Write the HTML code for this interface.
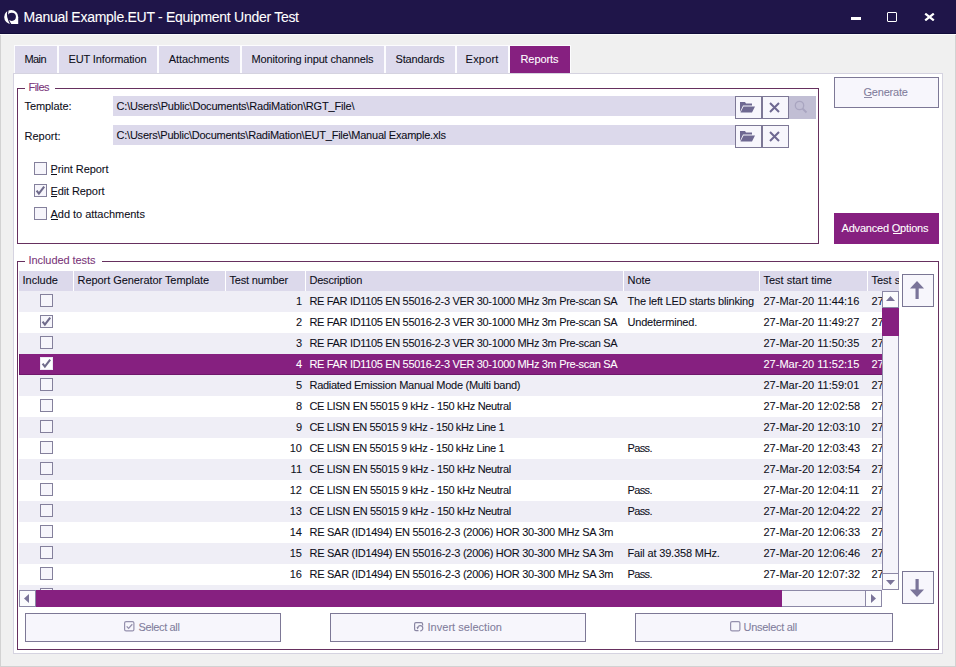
<!DOCTYPE html>
<html><head><meta charset="utf-8">
<style>
*{box-sizing:border-box;margin:0;padding:0}
html,body{width:956px;height:667px;overflow:hidden;background:#f0f0f0;font-family:"Liberation Sans",sans-serif;font-size:11px;color:#0e0e1a}
.a{position:absolute}
.t{position:absolute;white-space:nowrap;line-height:20px;-webkit-text-stroke:0.08px currentColor}
</style></head><body>
<div class="a" style="left:0px;top:0px;width:956px;height:34px;background:#1f1549"></div>
<div class="a" style="left:0px;top:33px;width:956px;height:1px;background:#110b3a"></div>
<div class="a" style="left:0px;top:34px;width:956px;height:1px;background:#fbfbfb"></div>
<div class="a" style="left:0px;top:35px;width:1px;height:632px;background:#d2d2d2"></div>
<div class="a" style="left:955px;top:35px;width:1px;height:632px;background:#d2d2d2"></div>
<div class="a" style="left:0px;top:666px;width:956px;height:1px;background:#d2d2d2"></div>
<svg class="a" style="left:0px;top:6px" width="24" height="22" viewBox="0 6 24 22">
  <circle cx="11.2" cy="17" r="7" fill="#fff"/>
  <path d="M11.2 17 H18.2 V24 H11.2 Z" fill="#fff"/>
  <circle cx="11.8" cy="16.8" r="4.1" fill="#1f1549"/>
  <path d="M8 10 Q6.3 17.5 11 24.8" fill="none" stroke="#1f1549" stroke-width="1.2"/>
</svg>
<div class="a" style="left:851px;top:17px;width:10px;height:3px;background:#fff"></div>
<div class="a" style="left:887px;top:12px;width:9.5px;height:9.5px;border:1.5px solid #fff;border-radius:1px"></div>
<svg class="a" style="left:924px;top:12.5px" width="11" height="8" viewBox="0 0 11 8">
  <path d="M1.2 0.6 L9.8 7.4 M9.8 0.6 L1.2 7.4" stroke="#fff" stroke-width="2.2"/></svg>
<div class="a" style="left:14px;top:45px;width:44px;height:28px;background:#fcfcfe"></div>
<div class="a" style="left:15px;top:46px;width:42px;height:27px;background:#dddaec"></div>
<div class="a" style="left:58px;top:45px;width:100px;height:28px;background:#fcfcfe"></div>
<div class="a" style="left:59px;top:46px;width:98px;height:27px;background:#dddaec"></div>
<div class="a" style="left:158px;top:45px;width:83px;height:28px;background:#fcfcfe"></div>
<div class="a" style="left:159px;top:46px;width:81px;height:27px;background:#dddaec"></div>
<div class="a" style="left:241px;top:45px;width:144px;height:28px;background:#fcfcfe"></div>
<div class="a" style="left:242px;top:46px;width:142px;height:27px;background:#dddaec"></div>
<div class="a" style="left:385px;top:45px;width:71px;height:28px;background:#fcfcfe"></div>
<div class="a" style="left:386px;top:46px;width:69px;height:27px;background:#dddaec"></div>
<div class="a" style="left:456px;top:45px;width:53px;height:28px;background:#fcfcfe"></div>
<div class="a" style="left:457px;top:46px;width:51px;height:27px;background:#dddaec"></div>
<div class="a" style="left:509px;top:45px;width:62px;height:28px;background:#fcfcfe"></div>
<div class="a" style="left:510px;top:46px;width:60px;height:27px;background:#862080"></div>
<div class="a" style="left:13px;top:73px;width:930px;height:581px;background:#fff;border:1px solid #d5d3e0"></div>
<div class="a" style="left:17px;top:88px;width:802px;height:156px;border:1px solid #66305f"></div>
<div class="a" style="left:25px;top:80px;width:30px;height:14px;background:#fff"></div>
<div class="a" style="left:113px;top:96px;width:622px;height:20px;background:#dcd9eb"></div>
<div class="a" style="left:113px;top:125px;width:622px;height:20px;background:#dcd9eb"></div>
<div class="a" style="left:735px;top:96px;width:27px;height:23px;background:#f7f6fc;border:1px solid #7d7896"></div>
<div class="a" style="left:762px;top:96px;width:27px;height:23px;background:#f7f6fc;border:1px solid #7d7896"></div>
<svg class="a" style="left:740px;top:102px" width="15" height="11" viewBox="0 0 15 11">
<path d="M0 0 H5 L6 1.5 H12 V3.5 H3 L0 10 Z M3.5 4.5 H15 L12 10.5 H0.5 Z" fill="#6e6891"/></svg>
<svg class="a" style="left:769px;top:102px" width="11" height="11" viewBox="0 0 11 11">
<path d="M1 1 L10 10 M10 1 L1 10" stroke="#6e6891" stroke-width="2"/></svg>
<div class="a" style="left:735px;top:125px;width:27px;height:23px;background:#f7f6fc;border:1px solid #7d7896"></div>
<div class="a" style="left:762px;top:125px;width:27px;height:23px;background:#f7f6fc;border:1px solid #7d7896"></div>
<svg class="a" style="left:740px;top:131px" width="15" height="11" viewBox="0 0 15 11">
<path d="M0 0 H5 L6 1.5 H12 V3.5 H3 L0 10 Z M3.5 4.5 H15 L12 10.5 H0.5 Z" fill="#6e6891"/></svg>
<svg class="a" style="left:769px;top:131px" width="11" height="11" viewBox="0 0 11 11">
<path d="M1 1 L10 10 M10 1 L1 10" stroke="#6e6891" stroke-width="2"/></svg>
<div class="a" style="left:789px;top:96px;width:27px;height:23px;background:#c1bed4"></div>
<svg class="a" style="left:794px;top:100px" width="14" height="14" viewBox="0 0 14 14">
<circle cx="5.5" cy="5.5" r="4.2" fill="none" stroke="#a9a5c0" stroke-width="1.3"/>
<path d="M8.5 8.5 L12.5 12.5" stroke="#a9a5c0" stroke-width="1.8"/></svg>
<div class="a" style="left:34px;top:162px;width:13px;height:13px;background:#f6f5fb;border:1px solid #84809c"></div>
<div class="a" style="left:51px;top:174px;width:6px;height:1px;background:#0e0e1a"></div>
<div class="a" style="left:34px;top:184px;width:13px;height:13px;background:#f6f5fb;border:1px solid #84809c"></div>
<svg class="a" style="left:34px;top:184px" width="13" height="13" viewBox="0 0 13 13">
<path d="M2.6 6.6 L4.9 9.6 L10.2 2.6" fill="none" stroke="#6f6b8b" stroke-width="2.1"/></svg>
<div class="a" style="left:51px;top:196px;width:6px;height:1px;background:#0e0e1a"></div>
<div class="a" style="left:34px;top:207px;width:13px;height:13px;background:#f6f5fb;border:1px solid #84809c"></div>
<div class="a" style="left:51px;top:219px;width:7px;height:1px;background:#0e0e1a"></div>
<div class="a" style="left:834px;top:77px;width:105px;height:31px;background:#f7f6fc;border:1px solid #7d7896"></div>
<div class="a" style="left:864px;top:97px;width:8px;height:1px;background:#8d89a6"></div>
<div class="a" style="left:834px;top:213px;width:105px;height:31px;background:#862080"></div>
<div class="a" style="left:893px;top:233px;width:8px;height:1px;background:#fff"></div>
<div class="a" style="left:17px;top:261px;width:922px;height:389px;border:1px solid #66305f"></div>
<div class="a" style="left:25px;top:253px;width:77px;height:14px;background:#fff"></div>
<div class="a" style="left:19px;top:271px;width:880px;height:20px;background:#dcd9eb"></div>
<div class="a" style="left:73px;top:271px;width:1px;height:20px;background:#ffffff"></div>
<div class="a" style="left:225px;top:271px;width:1px;height:20px;background:#ffffff"></div>
<div class="a" style="left:305px;top:271px;width:1px;height:20px;background:#ffffff"></div>
<div class="a" style="left:623px;top:271px;width:1px;height:20px;background:#ffffff"></div>
<div class="a" style="left:759px;top:271px;width:1px;height:20px;background:#ffffff"></div>
<div class="a" style="left:867px;top:271px;width:1px;height:20px;background:#ffffff"></div>
<div class="a" style="left:19px;top:291px;width:863px;height:299px;overflow:hidden">
<div class="a" style="left:0px;top:0px;width:863px;height:21px;background:#efeef6"></div>
<div class="a" style="left:21px;top:3px;width:13px;height:13px;background:#f6f5fb;border:1px solid #84809c"></div>
<div class="a" style="left:0px;top:21px;width:863px;height:21px;background:#ffffff"></div>
<div class="a" style="left:21px;top:24px;width:13px;height:13px;background:#f6f5fb;border:1px solid #84809c"></div>
<svg class="a" style="left:21px;top:24px" width="13" height="13" viewBox="0 0 13 13">
<path d="M2.6 6.6 L4.9 9.6 L10.2 2.6" fill="none" stroke="#6f6b8b" stroke-width="2.1"/></svg>
<div class="a" style="left:0px;top:42px;width:863px;height:21px;background:#efeef6"></div>
<div class="a" style="left:21px;top:45px;width:13px;height:13px;background:#f6f5fb;border:1px solid #84809c"></div>
<div class="a" style="left:0px;top:63px;width:863px;height:21px;background:#862080"></div>
<div class="a" style="left:0px;top:83px;width:863px;height:1px;background:#6f176b"></div>
<div class="a" style="left:0px;top:63px;width:1px;height:21px;background:#6f176b"></div>
<div class="a" style="left:21px;top:66px;width:13px;height:13px;background:#fdfdff;border:1px solid #ece8f2"></div>
<svg class="a" style="left:21px;top:66px" width="13" height="13" viewBox="0 0 13 13">
<path d="M2.6 6.6 L4.9 9.6 L10.2 2.6" fill="none" stroke="#6f6b8b" stroke-width="2.1"/></svg>
<div class="a" style="left:0px;top:84px;width:863px;height:21px;background:#efeef6"></div>
<div class="a" style="left:21px;top:87px;width:13px;height:13px;background:#f6f5fb;border:1px solid #84809c"></div>
<div class="a" style="left:0px;top:105px;width:863px;height:21px;background:#ffffff"></div>
<div class="a" style="left:21px;top:108px;width:13px;height:13px;background:#f6f5fb;border:1px solid #84809c"></div>
<div class="a" style="left:0px;top:126px;width:863px;height:21px;background:#efeef6"></div>
<div class="a" style="left:21px;top:129px;width:13px;height:13px;background:#f6f5fb;border:1px solid #84809c"></div>
<div class="a" style="left:0px;top:147px;width:863px;height:21px;background:#ffffff"></div>
<div class="a" style="left:21px;top:150px;width:13px;height:13px;background:#f6f5fb;border:1px solid #84809c"></div>
<div class="a" style="left:0px;top:168px;width:863px;height:21px;background:#efeef6"></div>
<div class="a" style="left:21px;top:171px;width:13px;height:13px;background:#f6f5fb;border:1px solid #84809c"></div>
<div class="a" style="left:0px;top:189px;width:863px;height:21px;background:#ffffff"></div>
<div class="a" style="left:21px;top:192px;width:13px;height:13px;background:#f6f5fb;border:1px solid #84809c"></div>
<div class="a" style="left:0px;top:210px;width:863px;height:21px;background:#efeef6"></div>
<div class="a" style="left:21px;top:213px;width:13px;height:13px;background:#f6f5fb;border:1px solid #84809c"></div>
<div class="a" style="left:0px;top:231px;width:863px;height:21px;background:#ffffff"></div>
<div class="a" style="left:21px;top:234px;width:13px;height:13px;background:#f6f5fb;border:1px solid #84809c"></div>
<div class="a" style="left:0px;top:252px;width:863px;height:21px;background:#efeef6"></div>
<div class="a" style="left:21px;top:255px;width:13px;height:13px;background:#f6f5fb;border:1px solid #84809c"></div>
<div class="a" style="left:0px;top:273px;width:863px;height:21px;background:#ffffff"></div>
<div class="a" style="left:21px;top:276px;width:13px;height:13px;background:#f6f5fb;border:1px solid #84809c"></div>
<div class="a" style="left:0px;top:294px;width:863px;height:5px;background:#efeef6"></div>
<div class="a" style="left:21px;top:297px;width:13px;height:13px;background:#f6f5fb;border:1px solid #84809c"></div>
<div class="t" style="left:276.88px;top:0px;color:#0e0e1a;">1</div>
<div class="t" style="left:290.50px;top:0px;color:#0e0e1a;letter-spacing:-0.337px;">RE FAR ID1105 EN 55016-2-3 VER 30-1000 MHz 3m Pre-scan SA</div>
<div class="t" style="left:608.50px;top:0px;color:#0e0e1a;letter-spacing:-0.183px;">The left LED starts blinking</div>
<div class="t" style="left:744.50px;top:0px;color:#0e0e1a;">27-Mar-20 11:44:16</div>
<div class="t" style="left:852.50px;top:0px;color:#0e0e1a;">27-Mar-20</div>
<div class="t" style="left:276.88px;top:21px;color:#0e0e1a;">2</div>
<div class="t" style="left:290.50px;top:21px;color:#0e0e1a;letter-spacing:-0.337px;">RE FAR ID1105 EN 55016-2-3 VER 30-1000 MHz 3m Pre-scan SA</div>
<div class="t" style="left:608.50px;top:21px;color:#0e0e1a;letter-spacing:-0.205px;">Undetermined.</div>
<div class="t" style="left:744.50px;top:21px;color:#0e0e1a;">27-Mar-20 11:49:27</div>
<div class="t" style="left:852.50px;top:21px;color:#0e0e1a;">27-Mar-20</div>
<div class="t" style="left:276.88px;top:42px;color:#0e0e1a;">3</div>
<div class="t" style="left:290.50px;top:42px;color:#0e0e1a;letter-spacing:-0.337px;">RE FAR ID1105 EN 55016-2-3 VER 30-1000 MHz 3m Pre-scan SA</div>
<div class="t" style="left:744.50px;top:42px;color:#0e0e1a;">27-Mar-20 11:50:35</div>
<div class="t" style="left:852.50px;top:42px;color:#0e0e1a;">27-Mar-20</div>
<div class="t" style="left:276.88px;top:63px;color:#ffffff;">4</div>
<div class="t" style="left:290.50px;top:63px;color:#ffffff;letter-spacing:-0.337px;">RE FAR ID1105 EN 55016-2-3 VER 30-1000 MHz 3m Pre-scan SA</div>
<div class="t" style="left:744.50px;top:63px;color:#ffffff;">27-Mar-20 11:52:15</div>
<div class="t" style="left:852.50px;top:63px;color:#ffffff;">27-Mar-20</div>
<div class="t" style="left:276.88px;top:84px;color:#0e0e1a;">5</div>
<div class="t" style="left:290.50px;top:84px;color:#0e0e1a;letter-spacing:-0.282px;">Radiated Emission Manual Mode (Multi band)</div>
<div class="t" style="left:744.50px;top:84px;color:#0e0e1a;">27-Mar-20 11:59:01</div>
<div class="t" style="left:852.50px;top:84px;color:#0e0e1a;">27-Mar-20</div>
<div class="t" style="left:276.88px;top:105px;color:#0e0e1a;">8</div>
<div class="t" style="left:290.50px;top:105px;color:#0e0e1a;letter-spacing:-0.333px;">CE LISN EN 55015 9 kHz - 150 kHz Neutral</div>
<div class="t" style="left:744.50px;top:105px;color:#0e0e1a;">27-Mar-20 12:02:58</div>
<div class="t" style="left:852.50px;top:105px;color:#0e0e1a;">27-Mar-20</div>
<div class="t" style="left:276.88px;top:126px;color:#0e0e1a;">9</div>
<div class="t" style="left:290.50px;top:126px;color:#0e0e1a;letter-spacing:-0.371px;">CE LISN EN 55015 9 kHz - 150 kHz Line 1</div>
<div class="t" style="left:744.50px;top:126px;color:#0e0e1a;">27-Mar-20 12:03:10</div>
<div class="t" style="left:852.50px;top:126px;color:#0e0e1a;">27-Mar-20</div>
<div class="t" style="left:270.75px;top:147px;color:#0e0e1a;">10</div>
<div class="t" style="left:290.50px;top:147px;color:#0e0e1a;letter-spacing:-0.371px;">CE LISN EN 55015 9 kHz - 150 kHz Line 1</div>
<div class="t" style="left:608.50px;top:147px;color:#0e0e1a;letter-spacing:-0.629px;">Pass.</div>
<div class="t" style="left:744.50px;top:147px;color:#0e0e1a;">27-Mar-20 12:03:43</div>
<div class="t" style="left:852.50px;top:147px;color:#0e0e1a;">27-Mar-20</div>
<div class="t" style="left:271.58px;top:168px;color:#0e0e1a;">11</div>
<div class="t" style="left:290.50px;top:168px;color:#0e0e1a;letter-spacing:-0.333px;">CE LISN EN 55015 9 kHz - 150 kHz Neutral</div>
<div class="t" style="left:744.50px;top:168px;color:#0e0e1a;">27-Mar-20 12:03:54</div>
<div class="t" style="left:852.50px;top:168px;color:#0e0e1a;">27-Mar-20</div>
<div class="t" style="left:270.75px;top:189px;color:#0e0e1a;">12</div>
<div class="t" style="left:290.50px;top:189px;color:#0e0e1a;letter-spacing:-0.333px;">CE LISN EN 55015 9 kHz - 150 kHz Neutral</div>
<div class="t" style="left:608.50px;top:189px;color:#0e0e1a;letter-spacing:-0.629px;">Pass.</div>
<div class="t" style="left:744.50px;top:189px;color:#0e0e1a;">27-Mar-20 12:04:11</div>
<div class="t" style="left:852.50px;top:189px;color:#0e0e1a;">27-Mar-20</div>
<div class="t" style="left:270.75px;top:210px;color:#0e0e1a;">13</div>
<div class="t" style="left:290.50px;top:210px;color:#0e0e1a;letter-spacing:-0.333px;">CE LISN EN 55015 9 kHz - 150 kHz Neutral</div>
<div class="t" style="left:608.50px;top:210px;color:#0e0e1a;letter-spacing:-0.629px;">Pass.</div>
<div class="t" style="left:744.50px;top:210px;color:#0e0e1a;">27-Mar-20 12:04:22</div>
<div class="t" style="left:852.50px;top:210px;color:#0e0e1a;">27-Mar-20</div>
<div class="t" style="left:270.75px;top:231px;color:#0e0e1a;">14</div>
<div class="t" style="left:290.50px;top:231px;color:#0e0e1a;letter-spacing:-0.275px;">RE SAR (ID1494) EN 55016-2-3 (2006) HOR 30-300 MHz SA 3m</div>
<div class="t" style="left:744.50px;top:231px;color:#0e0e1a;">27-Mar-20 12:06:33</div>
<div class="t" style="left:852.50px;top:231px;color:#0e0e1a;">27-Mar-20</div>
<div class="t" style="left:270.75px;top:252px;color:#0e0e1a;">15</div>
<div class="t" style="left:290.50px;top:252px;color:#0e0e1a;letter-spacing:-0.275px;">RE SAR (ID1494) EN 55016-2-3 (2006) HOR 30-300 MHz SA 3m</div>
<div class="t" style="left:608.50px;top:252px;color:#0e0e1a;letter-spacing:-0.165px;">Fail at 39.358 MHz.</div>
<div class="t" style="left:744.50px;top:252px;color:#0e0e1a;">27-Mar-20 12:06:46</div>
<div class="t" style="left:852.50px;top:252px;color:#0e0e1a;">27-Mar-20</div>
<div class="t" style="left:270.75px;top:273px;color:#0e0e1a;">16</div>
<div class="t" style="left:290.50px;top:273px;color:#0e0e1a;letter-spacing:-0.275px;">RE SAR (ID1494) EN 55016-2-3 (2006) HOR 30-300 MHz SA 3m</div>
<div class="t" style="left:608.50px;top:273px;color:#0e0e1a;letter-spacing:-0.629px;">Pass.</div>
<div class="t" style="left:744.50px;top:273px;color:#0e0e1a;">27-Mar-20 12:07:32</div>
<div class="t" style="left:852.50px;top:273px;color:#0e0e1a;">27-Mar-20</div>
</div>
<div class="a" style="left:882px;top:291px;width:17px;height:299px;background:#f5f4fa;border:1px solid #8c88a6"></div>
<div class="a" style="left:882px;top:291px;width:17px;height:17px;background:#fbfbfd;border:1px solid #8c88a6"></div>
<svg class="a" style="left:886px;top:296px" width="9" height="5" viewBox="0 0 9 5"><path d="M0 5 L4.5 0 L9 5 Z" fill="#7a7499"/></svg>
<div class="a" style="left:882px;top:308px;width:17px;height:28px;background:#862080"></div>
<div class="a" style="left:882px;top:573px;width:17px;height:17px;background:#fbfbfd;border:1px solid #8c88a6"></div>
<svg class="a" style="left:886px;top:580px" width="9" height="5" viewBox="0 0 9 5"><path d="M0 0 L4.5 5 L9 0 Z" fill="#7a7499"/></svg>
<div class="a" style="left:19px;top:590px;width:863px;height:17px;background:#f5f4fa;border:1px solid #8c88a6"></div>
<div class="a" style="left:19px;top:590px;width:17px;height:17px;background:#fbfbfd;border:1px solid #8c88a6"></div>
<svg class="a" style="left:24px;top:594px" width="5" height="9" viewBox="0 0 5 9"><path d="M5 0 L0 4.5 L5 9 Z" fill="#7a7499"/></svg>
<div class="a" style="left:36px;top:590px;width:746px;height:17px;background:#862080"></div>
<div class="a" style="left:865px;top:590px;width:17px;height:17px;background:#fbfbfd;border:1px solid #8c88a6"></div>
<svg class="a" style="left:871px;top:594px" width="5" height="9" viewBox="0 0 5 9"><path d="M0 0 L5 4.5 L0 9 Z" fill="#7a7499"/></svg>
<div class="a" style="left:902px;top:274px;width:32px;height:33px;background:#f7f6fc;border:1px solid #7a7694"></div>
<svg class="a" style="left:909px;top:280px" width="16" height="20" viewBox="0 0 16 20"><path d="M1 8.5 L8 1 L15 8.5 Z" fill="#7a7499"/><rect x="6.5" y="7" width="3.2" height="12" fill="#7a7499"/></svg>
<div class="a" style="left:902px;top:571px;width:32px;height:33px;background:#f7f6fc;border:1px solid #7a7694"></div>
<svg class="a" style="left:909px;top:578px" width="16" height="20" viewBox="0 0 16 20"><path d="M1 11.5 L8 19 L15 11.5 Z" fill="#7a7499"/><rect x="6.5" y="1" width="3.2" height="12" fill="#7a7499"/></svg>
<div class="a" style="left:25px;top:613px;width:256px;height:29px;background:#f7f6fc;border:1px solid #7d7896"></div>
<div class="a" style="left:330px;top:613px;width:256px;height:29px;background:#f7f6fc;border:1px solid #7d7896"></div>
<div class="a" style="left:635px;top:613px;width:258px;height:29px;background:#f7f6fc;border:1px solid #7d7896"></div>
<svg class="a" style="left:124px;top:621px" width="11" height="11" viewBox="0 0 11 11">
<rect x="0.6" y="0.6" width="9.3" height="9.3" rx="1.5" fill="none" stroke="#9590ad" stroke-width="1.2"/>
<path d="M2.7 5.4 L4.6 7.4 L8.3 3.3" fill="none" stroke="#9590ad" stroke-width="1.3"/></svg>
<svg class="a" style="left:414px;top:622px" width="11" height="11" viewBox="0 0 11 11">
<path d="M4.5 8.6 H1.9 Q0.6 8.6 0.6 7.3 V1.9 Q0.6 0.6 1.9 0.6 H7.3 Q8.6 0.6 8.6 1.9 V3.5" fill="none" stroke="#8a86a3" stroke-width="1.2"/>
<path d="M3.6 6.3 A2.6 2.6 0 1 1 6.2 8.9" fill="none" stroke="#8a86a3" stroke-width="1.2"/>
<path d="M2.4 5.2 L4.8 5.2 L3.6 7.4 Z" fill="#8a86a3"/></svg>
<svg class="a" style="left:730px;top:621px" width="11" height="11" viewBox="0 0 11 11">
<rect x="0.6" y="0.6" width="9.3" height="9.3" rx="1.5" fill="none" stroke="#9590ad" stroke-width="1.2"/></svg>
<div class="t" style="left:23.50px;top:7px;color:#ffffff;font-size:14px;letter-spacing:-0.278px;">Manual Example.EUT - Equipment Under Test</div>
<div class="t" style="left:24.50px;top:49px;color:#0e0e1a;letter-spacing:-0.615px;">Main</div>
<div class="t" style="left:68.50px;top:49px;color:#0e0e1a;letter-spacing:-0.135px;">EUT Information</div>
<div class="t" style="left:168.85px;top:49px;color:#0e0e1a;letter-spacing:-0.084px;">Attachments</div>
<div class="t" style="left:251.50px;top:49px;color:#0e0e1a;letter-spacing:-0.140px;">Monitoring input channels</div>
<div class="t" style="left:395.50px;top:49px;color:#0e0e1a;letter-spacing:-0.145px;">Standards</div>
<div class="t" style="left:465.60px;top:49px;color:#0e0e1a;letter-spacing:0.201px;">Export</div>
<div class="t" style="left:520.50px;top:49px;color:#fff;letter-spacing:-0.089px;">Reports</div>
<div class="t" style="left:28.50px;top:77px;color:#7a367a;letter-spacing:-0.559px;">Files</div>
<div class="t" style="left:24.50px;top:96px;color:#0e0e1a;letter-spacing:-0.088px;">Template:</div>
<div class="t" style="left:116.50px;top:96px;color:#0e0e1a;letter-spacing:-0.186px;">C:\Users\Public\Documents\RadiMation\RGT_File\</div>
<div class="t" style="left:24.50px;top:126px;color:#0e0e1a;letter-spacing:-0.013px;">Report:</div>
<div class="t" style="left:116.50px;top:125px;color:#0e0e1a;letter-spacing:-0.225px;">C:\Users\Public\Documents\RadiMation\EUT_File\Manual Example.xls</div>
<div class="t" style="left:50.50px;top:159px;color:#0e0e1a;letter-spacing:-0.064px;">Print Report</div>
<div class="t" style="left:50.50px;top:181px;color:#0e0e1a;letter-spacing:-0.103px;">Edit Report</div>
<div class="t" style="left:50.50px;top:204px;color:#0e0e1a;letter-spacing:-0.022px;">Add to attachments</div>
<div class="t" style="left:863.50px;top:82px;color:#827e9c;letter-spacing:-0.211px;">Generate</div>
<div class="t" style="left:841.50px;top:218px;color:#fff;letter-spacing:-0.193px;">Advanced Options</div>
<div class="t" style="left:28.50px;top:250px;color:#7a367a;letter-spacing:-0.067px;">Included tests</div>
<div class="a" style="left:19px;top:271px;width:54px;height:20px;overflow:hidden"><div class="t" style="left:3.50px;top:-1px;color:#0e0e1a;">Include</div></div>
<div class="a" style="left:74px;top:271px;width:151px;height:20px;overflow:hidden"><div class="t" style="left:3.50px;top:-1px;color:#0e0e1a;letter-spacing:-0.062px;">Report Generator Template</div></div>
<div class="a" style="left:226px;top:271px;width:79px;height:20px;overflow:hidden"><div class="t" style="left:3.50px;top:-1px;color:#0e0e1a;letter-spacing:-0.193px;">Test number</div></div>
<div class="a" style="left:306px;top:271px;width:317px;height:20px;overflow:hidden"><div class="t" style="left:3.50px;top:-1px;color:#0e0e1a;letter-spacing:-0.223px;">Description</div></div>
<div class="a" style="left:624px;top:271px;width:135px;height:20px;overflow:hidden"><div class="t" style="left:3.50px;top:-1px;color:#0e0e1a;">Note</div></div>
<div class="a" style="left:760px;top:271px;width:107px;height:20px;overflow:hidden"><div class="t" style="left:3.50px;top:-1px;color:#0e0e1a;">Test start time</div></div>
<div class="a" style="left:868px;top:271px;width:31px;height:20px;overflow:hidden"><div class="t" style="left:3.50px;top:-1px;color:#0e0e1a;">Test s</div></div>
<div class="t" style="left:138.50px;top:617px;color:#827e9c;letter-spacing:-0.360px;">Select all</div>
<div class="t" style="left:427.50px;top:617px;color:#827e9c;letter-spacing:0.028px;">Invert selection</div>
<div class="t" style="left:743.50px;top:617px;color:#827e9c;letter-spacing:-0.296px;">Unselect all</div>
</body></html>
